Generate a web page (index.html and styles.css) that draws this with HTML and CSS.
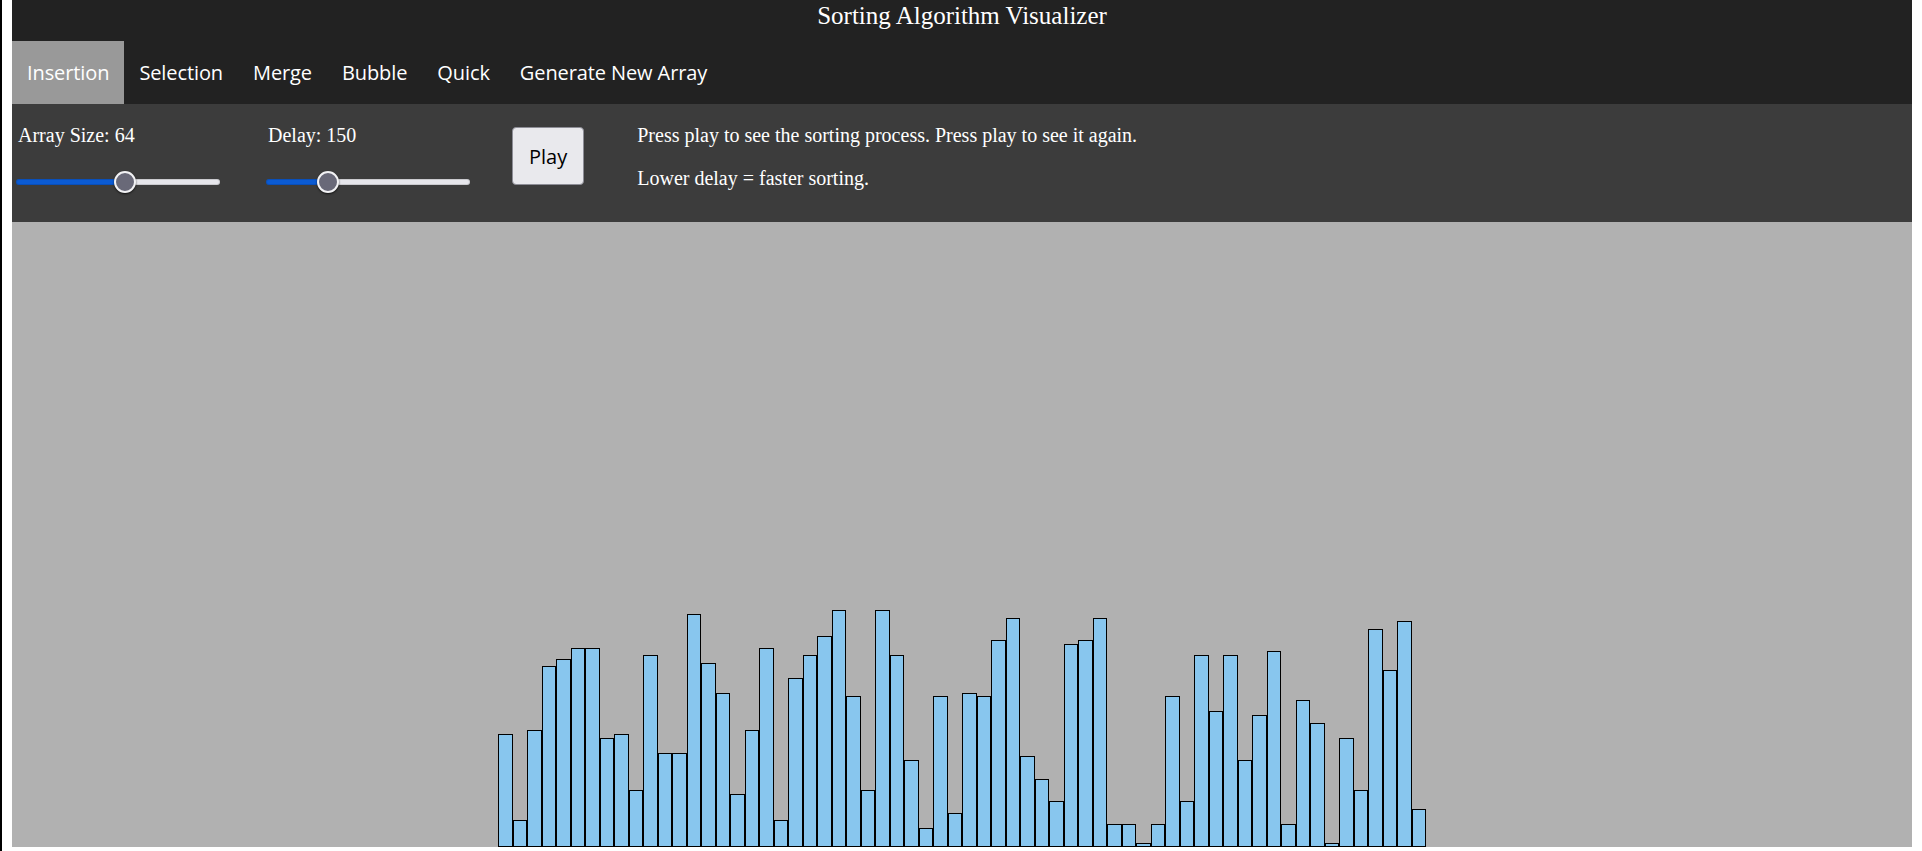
FILE: index.html
```html
<!DOCTYPE html>
<html lang="en">
<head>
<meta charset="utf-8">
<title>Sorting Algorithm Visualizer</title>
<link rel="stylesheet" href="styles.css">
</head>
<body>
<header class="topbar">
  <h1 class="title">Sorting Algorithm Visualizer</h1>
  <nav class="tabs">
    <a class="tab active">Insertion</a>
    <a class="tab">Selection</a>
    <a class="tab">Merge</a>
    <a class="tab">Bubble</a>
    <a class="tab">Quick</a>
    <a class="tab">Generate New Array</a>
  </nav>
</header>
<section class="controls">
  <div class="group group-size">
    <label class="label" for="size">Array Size: 64</label>
    <input class="slider" id="size" type="range" min="10" max="110" value="64" style="--fill: 53.8%">
  </div>
  <div class="group group-delay">
    <label class="label" for="delay">Delay: 150</label>
    <input class="slider" id="delay" type="range" min="10" max="510" value="150" style="--fill: 30.5%">
  </div>
  <button class="play">Play</button>
  <div class="info">
    <p>Press play to see the sorting process. Press play to see it again.</p>
    <p>Lower delay = faster sorting.</p>
  </div>
</section>
<main class="stage">
  <div class="bars">
    <div class="bar" style="height:113px"></div>
    <div class="bar" style="height:27px"></div>
    <div class="bar" style="height:117px"></div>
    <div class="bar" style="height:181px"></div>
    <div class="bar" style="height:188px"></div>
    <div class="bar" style="height:199px"></div>
    <div class="bar" style="height:199px"></div>
    <div class="bar" style="height:109px"></div>
    <div class="bar" style="height:113px"></div>
    <div class="bar" style="height:57px"></div>
    <div class="bar" style="height:192px"></div>
    <div class="bar" style="height:94px"></div>
    <div class="bar" style="height:94px"></div>
    <div class="bar" style="height:233px"></div>
    <div class="bar" style="height:184px"></div>
    <div class="bar" style="height:154px"></div>
    <div class="bar" style="height:53px"></div>
    <div class="bar" style="height:117px"></div>
    <div class="bar" style="height:199px"></div>
    <div class="bar" style="height:27px"></div>
    <div class="bar" style="height:169px"></div>
    <div class="bar" style="height:192px"></div>
    <div class="bar" style="height:211px"></div>
    <div class="bar" style="height:237px"></div>
    <div class="bar" style="height:151px"></div>
    <div class="bar" style="height:57px"></div>
    <div class="bar" style="height:237px"></div>
    <div class="bar" style="height:192px"></div>
    <div class="bar" style="height:87px"></div>
    <div class="bar" style="height:19px"></div>
    <div class="bar" style="height:151px"></div>
    <div class="bar" style="height:34px"></div>
    <div class="bar" style="height:154px"></div>
    <div class="bar" style="height:151px"></div>
    <div class="bar" style="height:207px"></div>
    <div class="bar" style="height:229px"></div>
    <div class="bar" style="height:91px"></div>
    <div class="bar" style="height:68px"></div>
    <div class="bar" style="height:46px"></div>
    <div class="bar" style="height:203px"></div>
    <div class="bar" style="height:207px"></div>
    <div class="bar" style="height:229px"></div>
    <div class="bar" style="height:23px"></div>
    <div class="bar" style="height:23px"></div>
    <div class="bar" style="height:4px"></div>
    <div class="bar" style="height:23px"></div>
    <div class="bar" style="height:151px"></div>
    <div class="bar" style="height:46px"></div>
    <div class="bar" style="height:192px"></div>
    <div class="bar" style="height:136px"></div>
    <div class="bar" style="height:192px"></div>
    <div class="bar" style="height:87px"></div>
    <div class="bar" style="height:132px"></div>
    <div class="bar" style="height:196px"></div>
    <div class="bar" style="height:23px"></div>
    <div class="bar" style="height:147px"></div>
    <div class="bar" style="height:124px"></div>
    <div class="bar" style="height:4px"></div>
    <div class="bar" style="height:109px"></div>
    <div class="bar" style="height:57px"></div>
    <div class="bar" style="height:218px"></div>
    <div class="bar" style="height:177px"></div>
    <div class="bar" style="height:226px"></div>
    <div class="bar" style="height:38px"></div>
  </div>
</main>
</body>
</html>
```

FILE: styles.css
```css
html {
  background: #fff;
  border-left: 2px solid #000;
}

body {
  margin: 0 10px 4px 10px;
  font-family: "Liberation Serif", "Times New Roman", serif;
  color: #fff;
}

.topbar {
  background: #222222;
}

.title {
  margin: 0;
  padding-bottom: 9px;
  font-size: 25px;
  font-weight: normal;
  line-height: 32px;
  text-align: center;
  color: #fff;
}

.tabs {
  display: flex;
  height: 63px;
}

.tab {
  display: block;
  padding: 0 15px;
  font-family: "Open Sans", "Liberation Sans", sans-serif;
  font-size: 20px;
  letter-spacing: -0.1px;
  line-height: 63px;
  color: #fff;
  cursor: pointer;
}

.tab.active {
  background: #999999;
}

.controls {
  display: flex;
  align-items: flex-start;
  height: 118px;
  padding-left: 4px;
  background: #3c3c3c;
}

.group {
  display: flex;
  flex-direction: column;
  align-items: flex-start;
  padding-top: 20px;
}

.group-size {
  width: 250px;
}

.group-delay {
  width: 246px;
}

.label {
  padding-left: 2px;
  font-size: 20px;
  line-height: 23px;
}

.slider {
  -webkit-appearance: none;
  appearance: none;
  width: 204px;
  height: 22px;
  margin: 24px 0 0 0;
  padding: 0;
  background: transparent;
}

.slider::-webkit-slider-runnable-track {
  height: 6px;
  border-radius: 3px;
  background: linear-gradient(to right, #0b5bd3 0, #0b5bd3 var(--fill), #e6e6eb var(--fill), #e6e6eb 100%);
  box-shadow: inset 0 0 0 1px rgba(0, 0, 0, 0.12);
}

.slider::-webkit-slider-thumb {
  -webkit-appearance: none;
  appearance: none;
  width: 22px;
  height: 22px;
  margin-top: -8px;
  border-radius: 50%;
  box-sizing: border-box;
  border: 2px solid #f2f2f4;
  background: #696978;
  box-shadow: 0 1px 2px rgba(0, 0, 0, 0.7);
}

.play {
  margin-top: 23px;
  padding: 2px 16px 0;
  height: 58px;
  border: 1px solid #8d8d96;
  border-radius: 4px;
  background: #e9e9ed;
  color: #000;
  font-family: "Open Sans", "Liberation Sans", sans-serif;
  font-size: 20px;
  line-height: 28px;
}

.info {
  margin-left: 53px;
  font-size: 20px;
  line-height: 23px;
}

.info p {
  margin: 20px 0;
}

.stage {
  display: flex;
  justify-content: center;
  align-items: flex-end;
  height: 625px;
  background: #b1b1b1;
}

.bars {
  display: flex;
  align-items: flex-end;
}

.bar {
  box-sizing: border-box;
  width: 14.5px;
  border: 1px solid #000;
  background: #88c6ee;
}
```
